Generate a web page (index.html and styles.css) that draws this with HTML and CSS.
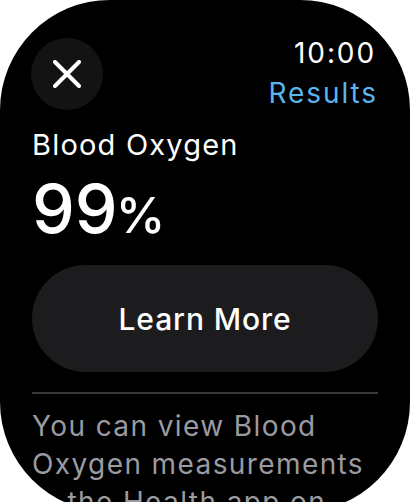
FILE: index.html
```html
<!DOCTYPE html>
<html lang="en">
<head>
    <meta charset="UTF-8">
    <meta name="viewport" content="width=device-width, initial-scale=1.0">
    <title>Blood Oxygen</title>
    <link rel="stylesheet" href="styles.css">
</head>
<body>
    <div class="watch-screen">
        <div class="top-bar">
            <button class="close-button" aria-label="Close">
                <svg width="28" height="28" viewBox="0 0 28 28">
                    <path d="M2 2 L26 26 M26 2 L2 26" stroke="#fff" stroke-width="4" stroke-linecap="round" fill="none"/>
                </svg>
            </button>
            <div class="status">
                <div class="clock">10:00</div>
                <div class="nav-title">Results</div>
            </div>
        </div>
        <h1 class="measure-name">Blood Oxygen</h1>
        <div class="measure-value">99<span class="unit">%</span></div>
        <button class="learn-button">Learn More</button>
        <hr class="divider">
        <p class="info-text">You can view Blood Oxygen measurements in the Health app on your iPhone.</p>
    </div>
</body>
</html>
```

FILE: styles.css
```css
html, body {
    margin: 0;
    padding: 0;
    background: #fff;
    overflow: hidden;
}
body {
    font-family: Inter, "Noto Sans", sans-serif;
    color: #fff;
}
.watch-screen {
    width: 410px;
    height: 512px;
    box-sizing: border-box;
    background: #000;
    border-radius: 110px;
    padding: 38px 32px 0 32px;
    overflow: hidden;
}
.top-bar {
    display: flex;
    justify-content: space-between;
    align-items: flex-start;
}
.close-button {
    width: 72px;
    height: 72px;
    margin-left: -1px;
    border: none;
    border-radius: 50%;
    background: #131313;
    display: flex;
    align-items: center;
    justify-content: center;
    padding: 0;
}
.status {
    margin-top: -5px;
    text-align: right;
    font-size: 28px;
    line-height: 40px;
    letter-spacing: 1.9px;
}
.clock {
    color: #fff;
    margin-right: 2px;
}
.nav-title {
    color: #5ab4ef;
}
.measure-name {
    margin: 14px 0 0;
    font-size: 29px;
    line-height: 36px;
    font-weight: 400;
    letter-spacing: 1.2px;
}
.measure-value {
    margin-top: 10px;
    font-size: 68px;
    line-height: 70px;
    font-weight: 500;
}
.unit {
    font-size: 50px;
    line-height: 0;
    font-weight: 500;
    margin-left: -2px;
}
.learn-button {
    display: block;
    width: 100%;
    height: 107px;
    margin-top: 22px;
    border: none;
    border-radius: 54px;
    background: #1c1c1e;
    color: #fff;
    font-family: inherit;
    font-size: 30px;
    font-weight: 500;
    letter-spacing: 0.9px;
}
.divider {
    margin: 20px 0 0;
    border: none;
    height: 2px;
    background: #39393b;
}
.info-text {
    margin: 13px 0 0;
    font-size: 28px;
    line-height: 38px;
    color: #9a9aa1;
    letter-spacing: 1.4px;
}
```
